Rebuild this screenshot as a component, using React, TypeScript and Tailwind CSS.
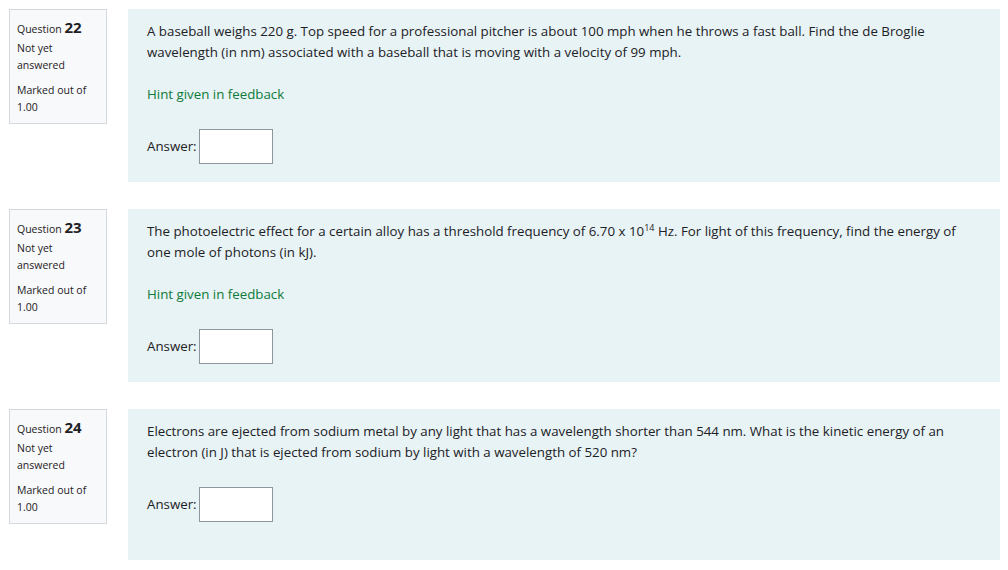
const questions = [
  {
    number: 22,
    text: (
      <>
        A baseball weighs 220 g. Top speed for a professional pitcher is about 100 mph when he throws a fast ball. Find the de Broglie
        <br />
        wavelength (in nm) associated with a baseball that is moving with a velocity of 99 mph.
      </>
    ),
    hint: true,
  },
  {
    number: 23,
    text: (
      <>
        The photoelectric effect for a certain alloy has a threshold frequency of 6.70 x 10
        <sup className="relative -top-[5px] align-baseline text-[9px] leading-none">14</sup> Hz. For light of this frequency, find the energy of
        <br />
        one mole of photons (in kJ).
      </>
    ),
    hint: true,
  },
  {
    number: 24,
    text: (
      <>
        Electrons are ejected from sodium metal by any light that has a wavelength shorter than 544 nm. What is the kinetic energy of an
        <br />
        electron (in J) that is ejected from sodium by light with a wavelength of 520 nm?
      </>
    ),
    hint: false,
  },
]

export default function App() {
  return (
    <div className="w-[1008px] h-[570px] overflow-hidden bg-white pt-[9px] pl-[9px] pr-[8px] font-['Open_Sans',sans-serif] text-[#1d2125]">
      {questions.map((q) => (
        <div key={q.number} className="flex items-start gap-[21px] mb-[27px]">
          {/* Info box */}
          <div className="w-[98px] shrink-0 border border-[#d5d9dd] bg-[#f8f9fa] px-[7px] pt-[7px] pb-[7px] text-[10.5px] leading-[17px]">
            <div className="leading-[20px]">
              Question <span className="text-[15px] font-bold">{q.number}</span>
            </div>
            <div className="mt-[1px]">Not yet<br />answered</div>
            <div className="mt-[8px]">Marked out of<br />1.00</div>
          </div>

          {/* Formulation */}
          <div
            className={`flex-1 bg-[#e7f3f5] pl-[19px] pr-[12px] pt-[12px] text-[13.3px] leading-[21px] ${
              q.hint ? "pb-[18px]" : "pb-[38px]"
            }`}
          >
            <p className="whitespace-nowrap">{q.text}</p>
            {q.hint && <p className="mt-[21px] text-[#0f7a39]">Hint given in feedback</p>}
            <div className="mt-[24px] flex items-center gap-[2px]">
              <span>Answer:</span>
              <input
                type="text"
                className="h-[35px] w-[74px] border border-[#8f959e] bg-white"
              />
            </div>
          </div>
        </div>
      ))}
    </div>
  )
}
